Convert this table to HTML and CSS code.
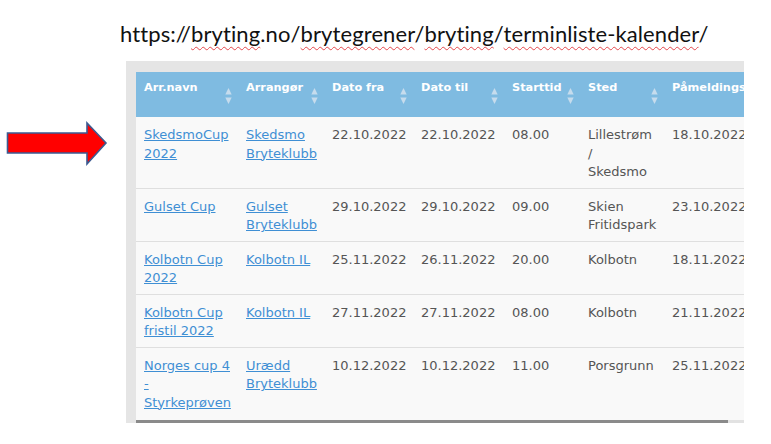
FILE: index.html
```html
<!DOCTYPE html>
<html lang="no">
<head>
<meta charset="utf-8">
<title>Terminliste</title>
<link rel="stylesheet" href="styles.css">
</head>
<body>
<h1 class="url">https://<span class="sp">bryting</span>.no/<span class="sp">brytegrener</span>/<span class="sp">bryting</span>/<span class="sp">terminliste-kalender</span>/</h1>
<div class="main">
  <svg class="arrow" width="102" height="46" viewBox="0 0 102 46">
    <polygon points="1.5,12 81,12 81,2 100,22 81,43 81,32 1.5,32" fill="#ff0000" stroke="#3b5b92" stroke-width="1.6" stroke-linejoin="miter"/>
  </svg>
  <div class="frame">
    <div class="table-wrap">
      <table class="events">
        <colgroup>
          <col class="c1"><col class="c2"><col class="c3"><col class="c4"><col class="c5"><col class="c6"><col class="c7">
        </colgroup>
        <thead>
          <tr>
            <th><div class="th-in"><span class="th-t">Arr.navn</span><svg class="sort" viewBox="0 0 6 15"><polygon points="0,6 3,0 6,6"/><polygon points="0,9 6,9 3,15"/></svg></div></th>
            <th><div class="th-in"><span class="th-t">Arrangør</span><svg class="sort" viewBox="0 0 6 15"><polygon points="0,6 3,0 6,6"/><polygon points="0,9 6,9 3,15"/></svg></div></th>
            <th><div class="th-in"><span class="th-t">Dato fra</span><svg class="sort" viewBox="0 0 6 15"><polygon points="0,6 3,0 6,6"/><polygon points="0,9 6,9 3,15"/></svg></div></th>
            <th><div class="th-in"><span class="th-t">Dato til</span><svg class="sort" viewBox="0 0 6 15"><polygon points="0,6 3,0 6,6"/><polygon points="0,9 6,9 3,15"/></svg></div></th>
            <th><div class="th-in"><span class="th-t">Starttid</span><svg class="sort" viewBox="0 0 6 15"><polygon points="0,6 3,0 6,6"/><polygon points="0,9 6,9 3,15"/></svg></div></th>
            <th><div class="th-in"><span class="th-t">Sted</span><svg class="sort" viewBox="0 0 6 15"><polygon points="0,6 3,0 6,6"/><polygon points="0,9 6,9 3,15"/></svg></div></th>
            <th><div class="th-in"><span class="th-t">Påmeldingsfrist</span></div></th>
          </tr>
        </thead>
        <tbody>
          <tr>
            <td><a href="#">SkedsmoCup 2022</a></td>
            <td><a href="#">Skedsmo Bryteklubb</a></td>
            <td>22.10.2022</td><td>22.10.2022</td><td>08.00</td>
            <td>Lillestrøm<br>/<br>Skedsmo</td>
            <td>18.10.2022</td>
          </tr>
          <tr>
            <td><a href="#">Gulset Cup</a></td>
            <td><a href="#">Gulset Bryteklubb</a></td>
            <td>29.10.2022</td><td>29.10.2022</td><td>09.00</td>
            <td>Skien Fritidspark</td>
            <td>23.10.2022</td>
          </tr>
          <tr>
            <td><a href="#">Kolbotn Cup 2022</a></td>
            <td><a href="#">Kolbotn IL</a></td>
            <td>25.11.2022</td><td>26.11.2022</td><td>20.00</td>
            <td>Kolbotn</td>
            <td>18.11.2022</td>
          </tr>
          <tr>
            <td><a href="#">Kolbotn Cup fristil 2022</a></td>
            <td><a href="#">Kolbotn IL</a></td>
            <td>27.11.2022</td><td>27.11.2022</td><td>08.00</td>
            <td>Kolbotn</td>
            <td>21.11.2022</td>
          </tr>
          <tr>
            <td><a href="#">Norges cup 4 - Styrkeprøven</a></td>
            <td><a href="#">Urædd Bryteklubb</a></td>
            <td>10.12.2022</td><td>10.12.2022</td><td>11.00</td>
            <td>Porsgrunn</td>
            <td>25.11.2022</td>
          </tr>
        </tbody>
      </table>
    </div>
    <div class="scrollbar"><div class="thumb"></div></div>
  </div>
</div>
</body>
</html>
```

FILE: styles.css
```css
html, body {
  margin: 0;
  background: #ffffff;
}

.url {
  margin: 0;
  padding: 19px 0 0 120px;
  height: 30px;
  font-family: "Lato", "Open Sans", sans-serif;
  font-weight: 400;
  font-size: 22px;
  letter-spacing: 0.1px;
  line-height: 30px;
  color: #111111;
  white-space: nowrap;
}

.sp {
  text-decoration: underline wavy #e4474b;
  text-decoration-thickness: 1px;
  text-underline-offset: 4px;
}

.main {
  display: flex;
  align-items: flex-start;
  padding-left: 6px;
  gap: 18px;
}

.arrow {
  display: block;
  margin-top: 72px;
  flex-shrink: 0;
}

.frame {
  margin-top: 12px;
  width: 608px;
  padding: 11px 0 0 10px;
  background: #e5e5e5;
  overflow: hidden;
}

.table-wrap {
  overflow: hidden;
  background: #f9f9f9;
}

.events {
  border-collapse: collapse;
  table-layout: fixed;
  width: 620px;
  font-family: "DejaVu Sans", Verdana, sans-serif;
}

.c1 { width: 102px; }
.c2 { width: 86px; }
.c3 { width: 89px; }
.c4 { width: 91px; }
.c5 { width: 76px; }
.c6 { width: 84px; }
.c7 { width: 92px; }

.events th {
  height: 45px;
  box-sizing: border-box;
  padding: 8px 6px 0 8px;
  vertical-align: top;
  text-align: left;
  background: #7fbbe1;
  color: #ffffff;
  font-size: 11.3px;
  font-weight: bold;
  line-height: 15px;
}

.th-in {
  display: flex;
  justify-content: space-between;
  align-items: flex-start;
  gap: 2px;
}

.th-t {
  white-space: nowrap;
  flex-shrink: 0;
}

.sort {
  width: 7px;
  height: 16px;
  margin-top: 8px;
  flex-shrink: 0;
  fill: #c6dced;
}

.events td {
  padding: 9px 6px 6px 8px;
  vertical-align: top;
  font-size: 13px;
  line-height: 18.5px;
  color: #555555;
  border-bottom: 1px solid #dfdfdf;
}

.events tbody tr:last-child td {
  border-bottom: none;
  padding-bottom: 8px;
}

.events a {
  color: #3f8fd4;
  text-decoration: underline;
}

.scrollbar {
  height: 3px;
  background: #e2e2e2;
}

.thumb {
  width: 592px;
  height: 3px;
  background: #8a8a8a;
}
```
